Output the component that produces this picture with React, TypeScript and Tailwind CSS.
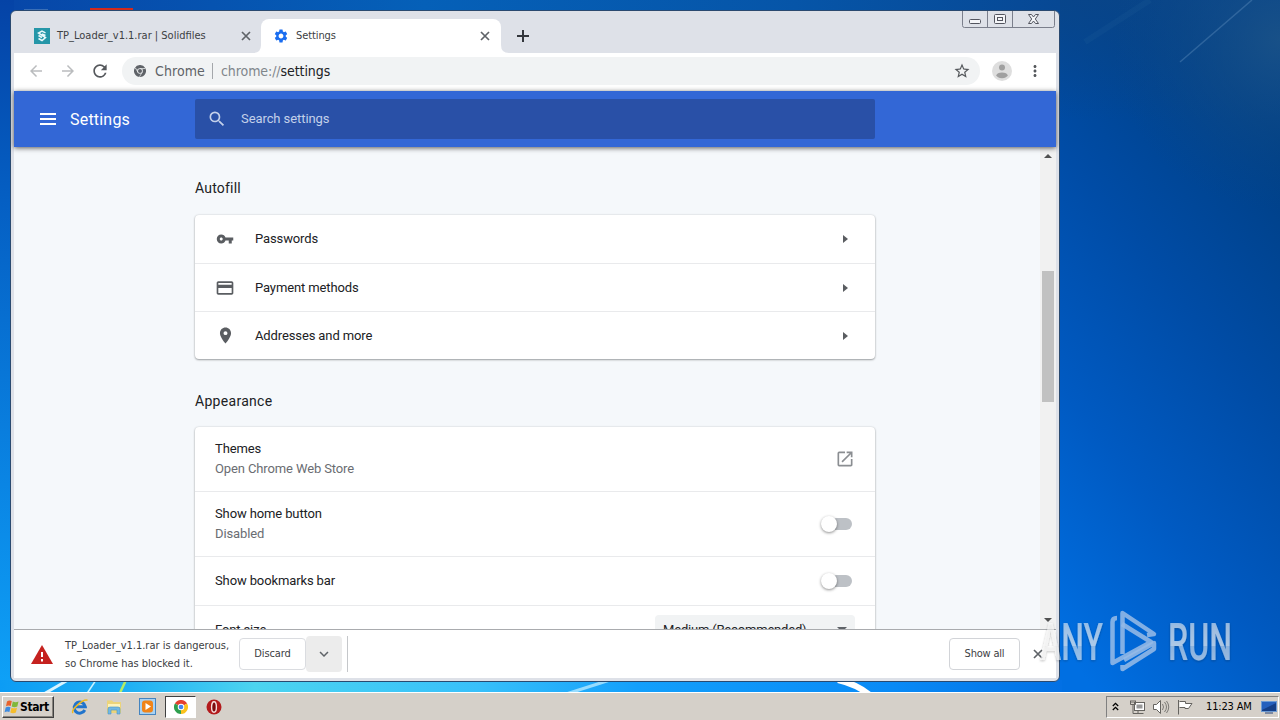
import type { ReactNode } from 'react';
import {
  MdVpnKey, MdCreditCard, MdPlace, MdOpenInNew, MdSearch, MdSettings,
  MdArrowBack, MdArrowForward, MdRefresh, MdStarBorder, MdMoreVert, MdExpandMore,
} from 'react-icons/md';

const tahoma = 'font-["DejaVu_Sans_Condensed","DejaVu_Sans",sans-serif] [font-stretch:condensed]';

function Wallpaper() {
  return (
    <svg className="absolute inset-0" width="1280" height="720" viewBox="0 0 1280 720">
      <defs>
        <linearGradient id="top" x1="0" x2="1">
          <stop offset="0" stopColor="#0746a8" />
          <stop offset=".4" stopColor="#0560b8" />
          <stop offset=".75" stopColor="#0655a8" />
          <stop offset="1" stopColor="#074894" />
        </linearGradient>
        <linearGradient id="left" x1="0" x2="0" y1="0" y2="1">
          <stop offset="0" stopColor="#0543a6" />
          <stop offset=".3" stopColor="#0560c4" />
          <stop offset=".7" stopColor="#0a85e4" />
          <stop offset="1" stopColor="#0ea2f8" />
        </linearGradient>
        <linearGradient id="right" gradientUnits="userSpaceOnUse" x1="1040" y1="620" x2="1490" y2="270">
          <stop offset="0" stopColor="#006fe2" />
          <stop offset=".28" stopColor="#005ac2" />
          <stop offset=".54" stopColor="#004ca6" />
          <stop offset=".85" stopColor="#003f84" />
          <stop offset="1" stopColor="#003e82" />
        </linearGradient>
        <linearGradient id="shade" x1="0" x2="0" y1="0" y2="1">
          <stop offset="0" stopColor="#0a4588" stopOpacity=".8" />
          <stop offset="1" stopColor="#0a4588" stopOpacity="0" />
        </linearGradient>
        <radialGradient id="corner" gradientUnits="userSpaceOnUse" cx="1280" cy="40" r="170">
          <stop offset="0" stopColor="#1a5288" stopOpacity=".9" />
          <stop offset="1" stopColor="#0a488c" stopOpacity="0" />
        </radialGradient>
        <linearGradient id="bottom" x1="0" x2="1">
          <stop offset="0" stopColor="#0c9cf4" />
          <stop offset=".12" stopColor="#20b0f4" />
          <stop offset=".24" stopColor="#4cd4f0" />
          <stop offset=".45" stopColor="#38c0fa" />
          <stop offset=".6" stopColor="#139ffb" />
          <stop offset=".84" stopColor="#098af6" />
          <stop offset="1" stopColor="#0270e4" />
        </linearGradient>
      </defs>
      <rect width="1280" height="720" fill="url(#right)" />
      <rect x="1059" width="221" height="120" fill="url(#shade)" />
      <rect width="1060" height="14" fill="url(#top)" />
      <rect x="1059" width="221" height="300" fill="url(#corner)" />
      <rect y="0" width="14" height="692" fill="url(#left)" />
      <rect y="680" width="1062" height="12" fill="url(#bottom)" />
      <path d="M1180 62L1252 0" stroke="#4f82b4" strokeOpacity=".5" strokeWidth="1.5" />
      <path d="M1085 42L1150 0" stroke="#3570a8" strokeOpacity=".12" strokeWidth="6" />
      <path d="M42 695L68 680" stroke="#d8f4ff" strokeWidth="3" />
      <path d="M86 695L96 680" stroke="#c8f2ff" strokeWidth="1.5" />
      <path d="M119 695L126 680" stroke="#b6ec64" strokeWidth="2.5" />
      <path d="M563 695L610 680" stroke="#b5e8ff" strokeOpacity=".8" strokeWidth="3" />
      <path d="M838 680Q856 684 870 695" stroke="#fff" strokeWidth="6" fill="none" />
      <path d="M24 10h24" stroke="#6f97c4" />
      <path d="M90 9h43" stroke="#d42a1c" strokeWidth="2" />
    </svg>
  );
}

function Cross({ className = '' }: { className?: string }) {
  return (
    <svg className={className} width="14" height="14" viewBox="0 0 14 14">
      <path d="M3 3L11 11M11 3L3 11" stroke="#5f6368" strokeWidth="1.7" />
    </svg>
  );
}

function ChromeMark({ size, mono }: { size: number; mono?: boolean }) {
  return (
    <svg width={size} height={size} viewBox="0 0 24 24">
      <path d="M12 12L1.6 6A12 12 0 0 1 22.4 6Z" fill={mono ? '#5f6368' : '#e4402f'} />
      <path d="M12 12L22.4 6A12 12 0 0 1 12 24Z" fill={mono ? '#5f6368' : '#fbc21c'} />
      <path d="M12 12L12 24A12 12 0 0 1 1.6 6Z" fill={mono ? '#5f6368' : '#2e9f4e'} />
      {mono && <path d="M12 7h10.5M7.8 14.5L2.6 5.5M16.2 14.5L11 23.6" stroke="#f1f3f4" strokeWidth="1.4" />}
      <circle cx="12" cy="12" r="5.6" fill={mono ? '#f1f3f4' : '#fff'} />
      <circle cx="12" cy="12" r="4" fill={mono ? '#5f6368' : '#4385f0'} />
    </svg>
  );
}

function WindowControls() {
  return (
    <svg width="93" height="18" viewBox="0 0 93 18" fill="none" stroke="#7b7f8c">
      <path d="M.5 0V14.5Q.5 16.5 2.5 16.5H90.5Q92.5 16.5 92.5 14.5V0M25.5 0V16M50.5 0V16" />
      <g stroke="#53555f" fill="#f4f5f8">
        <rect x="7.500" y="8.500" width="11" height="4" rx="1" />
        <rect x="32.500" y="3.500" width="11" height="9" rx="1" />
        <rect x="35.500" y="6.500" width="5" height="3" />
        <path d="M66.500 3.500h3l2 2.500 2-2.500h3l-3.200 4.500 3.200 4.500h-3l-2-2.500-2 2.500h-3l3.200-4.500z" />
      </g>
    </svg>
  );
}

function TabStrip() {
  return (
    <div className={`flex h-[42px] pt-2 text-[11px] text-[#3c4043] ${tahoma}`}>
      <div className="flex h-[34px] w-[247px] items-center pl-5">
        <svg width="16" height="16" viewBox="0 0 16 16">
          <rect width="16" height="16" fill="#2596a8" />
          <path d="M11.500 4.800L8 3 4.500 5l7 4.500L8 12.500l-3.500-2M4.500 7.500L8 9.500M8 6l3.500 1.500" stroke="#e9f8fa" strokeWidth="1.500" fill="none" />
        </svg>
        <span className="ml-[7px] w-[182px] whitespace-nowrap pt-px">TP_Loader_v1.1.rar | Solidfiles</span>
        <Cross />
      </div>
      <div className="relative flex h-[34px] w-[240px] items-center rounded-t-lg bg-white pl-3">
        <svg className="absolute -left-2 bottom-0" width="8" height="8"><path d="M0 8Q8 8 8 0V8Z" fill="#fff" /></svg>
        <svg className="absolute -right-2 bottom-0" width="8" height="8"><path d="M8 8Q0 8 0 0V8Z" fill="#fff" /></svg>
        <MdSettings size={16} className="text-[#1a6df0]" />
        <span className="ml-[7px] w-[182px] pt-px tracking-[-0.1px]">Settings</span>
        <Cross />
      </div>
      <div className="flex h-[34px] w-[44px] items-center justify-center">
        <svg width="12" height="12"><path d="M6 0V12M0 6H12" stroke="#33363c" strokeWidth="2" /></svg>
      </div>
      <div className="-mt-2 ml-auto mr-[1px]"><WindowControls /></div>
    </div>
  );
}

function Toolbar() {
  return (
    <div className={`flex h-[38px] items-center bg-white pb-[2px] pl-[13px] ${tahoma}`}>
      <MdArrowBack size={18} className="text-[#babcbe]" />
      <MdArrowForward size={18} className="ml-[14px] text-[#babcbe]" />
      <MdRefresh size={20} className="ml-[13px] text-[#55585c]" />
      <div className="ml-3 flex h-7 w-[858px] items-center rounded-full bg-[#f1f3f4] pl-3 text-[14px] text-[#5f6368]">
        <ChromeMark size={12} mono />
        <span className="ml-[9px] w-[50px] tracking-[0.1px]">Chrome</span>
        <span className="mx-[7px] h-4 w-px bg-[#a4a7ab]" />
        <span className="ml-px tracking-[-0.08px] text-[#80868b]">chrome://<span className="text-[#202124]">settings</span></span>
        <MdStarBorder size={18} className="ml-auto mr-[9px] text-[#55585c]" />
      </div>
      <svg className="ml-3" width="20" height="20" viewBox="0 0 20 20">
        <circle cx="10" cy="10" r="10" fill="#dedede" />
        <circle cx="10" cy="6.500" r="3" fill="#a0a0a0" />
        <ellipse cx="10" cy="14.300" rx="5.600" ry="2.900" fill="#a0a0a0" />
      </svg>
      <MdMoreVert size={18} className="ml-[14px] text-[#55585c]" />
    </div>
  );
}

function SettingsHeader() {
  return (
    <div className="relative z-10 flex h-14 items-center bg-[#3367d6] pl-[26px] font-[Roboto,sans-serif] text-white shadow-[0_1px_5px_rgba(0,0,0,0.65)]">
      <svg width="16" height="12"><path d="M0 1H16M0 6H16M0 11H16" stroke="#fff" strokeWidth="2" /></svg>
      <span className="ml-[14px] w-[125px] pt-px text-[16px] tracking-[0.2px]">Settings</span>
      <div className="flex h-10 w-[680px] items-center rounded-[2px] bg-[#2950a7] pl-3 text-[13px] tracking-[-0.08px] text-[#c3d0ea]">
        <MdSearch size={20} />
        <span className="ml-[14px]">Search settings</span>
      </div>
    </div>
  );
}

function Arrow() {
  return <svg className="mr-[27px]" width="5" height="8"><path d="M0 0L5 4L0 8Z" fill="#5a5d61" /></svg>;
}

function Toggle() {
  return (
    <div className="relative mr-[23px] h-3 w-7 rounded-full bg-[#bdc1c6]">
      <span className="absolute -left-[3px] -top-[2px] size-4 rounded-full bg-white shadow-[0_1px_3px_rgba(0,0,0,0.45)]" />
    </div>
  );
}

function Card({ children, className = '' }: { children: ReactNode; className?: string }) {
  return (
    <div className={`w-[680px] divide-y divide-[#e9eaec] rounded bg-white shadow-[0_1px_2px_rgba(60,64,67,0.45),0_0px_2px_rgba(60,64,67,0.2)] ${className}`}>
      {children}
    </div>
  );
}

function LinkRow({ icon, label, height }: { icon: ReactNode; label: string; height: string }) {
  return (
    <div className={`flex items-center pl-5 ${height}`}>
      <span className="mr-5 flex w-5 justify-center text-[#5a5d61]">{icon}</span>
      <span className="grow">{label}</span>
      <Arrow />
    </div>
  );
}

function SettingRow({ label, sub, height, children }: { label: string; sub?: string; height: string; children: ReactNode }) {
  return (
    <div className={`flex items-center pl-5 ${height}`}>
      <div className="grow leading-5">
        <div>{label}</div>
        {sub && <div className="text-[#6a6d72]">{sub}</div>}
      </div>
      {children}
    </div>
  );
}

function SettingsBody() {
  return (
    <div className="flex h-[482px] overflow-hidden bg-[#f5f8fb] font-[Roboto,sans-serif] text-[13px] tracking-[-0.12px] text-[#202124]">
      <div className="grow pl-[181px]">
        <h2 className="mt-[29px] h-6 text-[14px] leading-6 tracking-[0.2px]">Autofill</h2>
        <Card className="mt-[15px]">
          <LinkRow height="h-[49px]" icon={<MdVpnKey size={18} />} label="Passwords" />
          <LinkRow height="h-[48px]" icon={<MdCreditCard size={20} />} label="Payment methods" />
          <LinkRow height="h-[47px]" icon={<MdPlace size={19} />} label="Addresses and more" />
        </Card>
        <h2 className="mt-[30px] h-6 text-[14px] leading-6 tracking-[0.3px]">Appearance</h2>
        <Card className="mt-[14px]">
          <SettingRow height="h-[65px]" label="Themes" sub="Open Chrome Web Store">
            <MdOpenInNew size={20} className="mr-5 text-[#8b8e92]" />
          </SettingRow>
          <SettingRow height="h-[65px]" label="Show home button" sub="Disabled"><Toggle /></SettingRow>
          <SettingRow height="h-[49px]" label="Show bookmarks bar"><Toggle /></SettingRow>
          <SettingRow height="h-[47px]" label="Font size">
            <div className="mr-5 flex h-[30px] w-[200px] items-center justify-between rounded bg-[#f1f3f4] px-2 tracking-[-0.18px]">
              <span>Medium (Recommended)</span>
              <svg width="10" height="5"><path d="M0 0H10L5 5Z" fill="#5f6368" /></svg>
            </div>
          </SettingRow>
        </Card>
      </div>
      <div className="flex w-4 shrink-0 flex-col items-center bg-[#f1f1f1] pt-[7px] pb-[7px]">
        <svg width="8" height="4"><path d="M0 4L4 0L8 4Z" fill="#505050" /></svg>
        <div className="mt-[113px] h-[131px] w-3 bg-[#c1c1c1]" />
        <svg className="mt-auto" width="8" height="4"><path d="M0 0L4 4L8 0Z" fill="#505050" /></svg>
      </div>
    </div>
  );
}

function DownloadShelf() {
  return (
    <div className={`flex h-[49px] grow items-center border-t border-[#a9abae] bg-white text-[11px] text-[#3c4043] ${tahoma}`}>
      <svg className="ml-[17px]" width="22" height="19" viewBox="0 0 22 19">
        <path d="M11 0L22 19H0Z" fill="#c5221f" />
        <path d="M11 7v5M11 14v2.500" stroke="#fff" strokeWidth="2" />
      </svg>
      <div className="ml-3 w-[174px] whitespace-nowrap pt-px leading-[18px] tracking-[-0.01px]">
        <div>TP_Loader_v1.1.rar is dangerous,</div>
        <div>so Chrome has blocked it.</div>
      </div>
      <div className="flex h-8 w-[67px] items-center justify-center rounded border border-[#dadce0] pt-px tracking-[-0.1px]">Discard</div>
      <div className="flex h-9 w-9 items-center justify-center rounded-sm bg-[#ececec]">
        <MdExpandMore size={18} className="text-[#5f6368]" />
      </div>
      <div className="ml-[5px] h-9 w-px bg-[#c5c7ca]" />
      <div className="ml-auto flex h-8 w-[71px] items-center justify-center rounded border border-[#d2d4d8] tracking-[-0.2px]">Show all</div>
      <Cross className="ml-[11px] mr-[11px]" />
    </div>
  );
}

function Watermark() {
  return (
    <svg className="absolute left-[1030px] top-[600px]" width="230" height="80" viewBox="0 0 230 80">
      <defs>
        <linearGradient id="wm" x1="0" x2="0" y1="0" y2="1">
          <stop offset="0" stopColor="#fff" stopOpacity=".5" />
          <stop offset=".55" stopColor="#fff" stopOpacity=".62" />
          <stop offset=".56" stopColor="#fff" stopOpacity=".48" />
          <stop offset="1" stopColor="#fff" stopOpacity=".6" />
        </linearGradient>
        <filter id="wms" x="-20%" y="-20%" width="140%" height="150%">
          <feDropShadow dx="0" dy="1" stdDeviation="1.3" floodColor="#222" floodOpacity=".5" />
        </filter>
      </defs>
      <g filter="url(#wms)" fontFamily="Roboto, sans-serif" fontWeight="500" fontSize="52" fill="url(#wm)">
        <text x="10" y="60" textLength="63" lengthAdjust="spacingAndGlyphs">ANY</text>
        <text x="138" y="60" textLength="64" lengthAdjust="spacingAndGlyphs">RUN</text>
      </g>
      <g fill="none" stroke="#94b9e6" strokeOpacity=".88" strokeWidth="4.500" strokeLinejoin="round">
        <path d="M87 18Q82.500 18 82.500 22V63L121 42L92 24" />
        <path d="M92.500 54V13L124 34L117 35" />
        <path d="M92.500 65V69L124 49V43L94 60" />
      </g>
    </svg>
  );
}

function Taskbar() {
  return (
    <div className="relative flex h-7 items-center border-t border-white bg-[#d5d0c9] pl-[2px] font-['DejaVu_Sans_Condensed','DejaVu_Sans',sans-serif] text-[11px] text-black">
      <div className="flex h-[22px] w-[52px] items-center border border-b-[#404040] border-l-white border-r-[#404040] border-t-white pl-px shadow-[inset_-1px_-1px_0_#88847e]">
        <svg width="16" height="16" viewBox="0 0 16 16">
          <path d="M3 2.500Q5 .8 7.800 2L6.700 7Q4.500 5.800 2 7.300Z" fill="#e8622c" />
          <path d="M8.800 2.500Q11.500 4 14.500 2.500L13.300 7.500Q10.500 8.800 7.700 7.500Z" fill="#80b83c" />
          <path d="M1.700 8.400Q4 7 6.500 8.200L5.400 13Q3 11.800.6 13.200Z" fill="#3d8be0" />
          <path d="M7.500 8.700Q10 10 13 8.700L11.900 13.500Q9 15 6.300 13.500Z" fill="#f5bd2c" />
        </svg>
        <span className="text-[12px] font-bold tracking-[-0.4px]">Start</span>
      </div>
      <svg className="ml-[17px]" width="18" height="18" viewBox="0 0 18 18">
        <path d="M13.800 12A5.600 5.600 0 1 1 14.300 8.800H5" fill="none" stroke="#2174cc" strokeWidth="3" />
        <path d="M2 15C-.5 12 12 .5 16.500 2.200" fill="none" stroke="#efb91f" strokeWidth="1.500" />
      </svg>
      <svg className="ml-4" width="18" height="18" viewBox="0 0 18 18">
        <path d="M2 4V2.500h5L8.500 4H16v11H2Z" fill="#ecd47a" />
        <path d="M3 6h12v3H3Z" fill="#fdf3bc" />
        <path d="M3 16v-5q0-2 2-2h8q2 0 2 2v5h-3v-4H6v4Z" fill="#72b8e4" stroke="#4c94c5" strokeWidth=".6" />
      </svg>
      <svg className="ml-4" width="17" height="17" viewBox="0 0 17 17">
        <rect x=".5" y=".5" width="16" height="16" fill="#a8d2f3" stroke="#4584bf" />
        <rect x="3" y="2.500" width="11" height="12" rx="3" fill="#f08419" />
        <path d="M6.500 5L12 8.500L6.500 12Z" fill="#fff" />
      </svg>
      <div className="ml-[9px] flex h-[22px] w-[31px] items-center justify-center border border-b-white border-l-[#404040] border-r-white border-t-[#404040] bg-white">
        <ChromeMark size={14} />
      </div>
      <svg className="ml-[10px]" width="16" height="16" viewBox="0 0 16 16">
        <circle cx="8" cy="8" r="7.500" fill="#b31a1c" />
        <ellipse cx="8" cy="8" rx="2.400" ry="5.200" fill="#7c0b0e" stroke="#f6dede" strokeWidth="1.400" />
      </svg>
      <div className="ml-auto mr-px flex h-[22px] w-[173px] items-center border border-b-white border-l-[#808080] border-r-white border-t-[#808080]">
        <svg className="ml-[5px]" width="7" height="9" fill="none" stroke="#000" strokeWidth="1.300"><path d="M.8 4L3.500 1.300L6.200 4M.8 8L3.500 5.300L6.200 8" /></svg>
        <svg className="ml-[10px]" width="17" height="16" viewBox="0 0 17 16" fill="#fff" stroke="#65635f">
          <rect x="5.500" y="3.500" width="10" height="8" />
          <rect x="7.500" y="5.500" width="6" height="4" fill="#989898" stroke="none" />
          <path d="M1.500 1.500V5.500H6.500V1.500M3 1v3M5 1v3M4 6V14.500H14.500M9 12v2" fill="none" />
        </svg>
        <svg className="ml-[7px]" width="17" height="16" viewBox="0 0 17 16" fill="#fff" stroke="#65635f">
          <path d="M.5 5.500H3.500L7.500 1.500V14.500L3.500 10.500H.5Z" />
          <path d="M9.500 5q2 3 0 6M11.500 3q4 5 0 10M13.500 2q4.500 6 0 12" fill="none" strokeWidth=".8" />
        </svg>
        <svg className="ml-[7px]" width="17" height="16" viewBox="0 0 17 16" fill="#fff" stroke="#65635f">
          <path d="M2.500 2.500H8.500V4.500H15L11.500 9.500H8V8.500H2.500M1.500 1V15.500" />
        </svg>
        <span className="ml-[12px] w-[49px] whitespace-nowrap pt-[2px] tracking-[-0.15px]">11:23 AM</span>
        <svg className="ml-[6px]" width="16" height="14" viewBox="0 0 16 14">
          <rect x=".5" y="1.500" width="15" height="10" fill="#2560bd" stroke="#6d9bd3" />
          <path d="M1 10L15 3V11H1Z" fill="#153f87" />
          <path d="M4 13h8" stroke="#24457c" />
        </svg>
      </div>
    </div>
  );
}

export default function App() {
  return (
    <div className="relative h-[720px] w-[1280px] overflow-hidden">
      <Wallpaper />
      <div className="relative h-[692px] pl-[10px] pt-[10px]">
        <div className="flex h-[672px] w-[1050px] flex-col overflow-hidden rounded-md border border-[#2a4a70] bg-[#dee1e8] px-[3px] pb-[3px]">
          <TabStrip />
          <Toolbar />
          <SettingsHeader />
          <SettingsBody />
          <DownloadShelf />
        </div>
      </div>
      <Taskbar />
      <Watermark />
    </div>
  );
}
